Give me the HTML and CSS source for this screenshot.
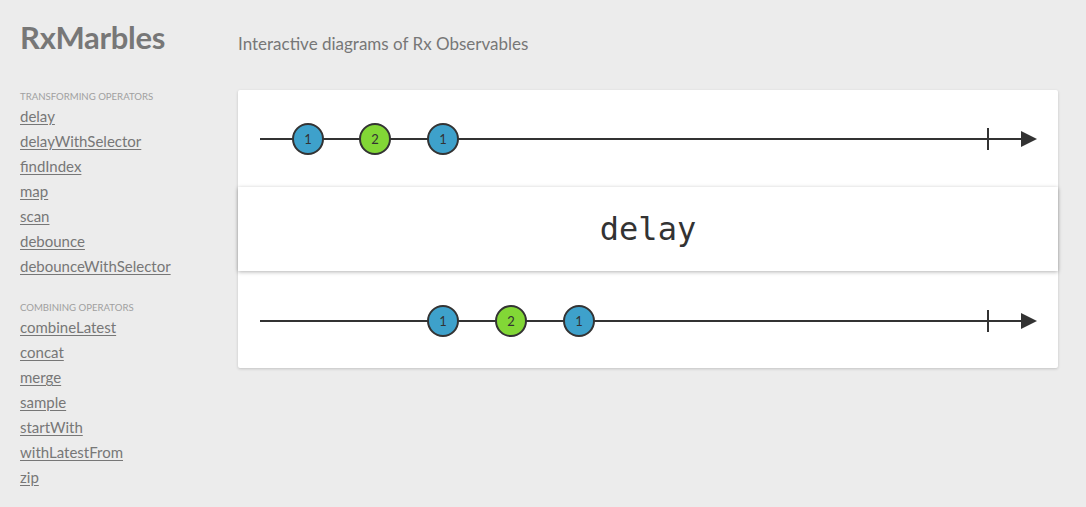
FILE: index.html
```html
<!DOCTYPE html>
<html>
<head>
<meta charset="utf-8">
<title>RxMarbles</title>
<link rel="stylesheet" href="styles.css">
</head>
<body>
<div class="page">
  <aside class="sidebar">
    <h1 class="logo">RxMarbles</h1>
    <div class="group">
      <div class="group-title">TRANSFORMING OPERATORS</div>
      <ul class="ops">
        <li><a href="#">delay</a></li>
        <li><a href="#">delayWithSelector</a></li>
        <li><a href="#">findIndex</a></li>
        <li><a href="#">map</a></li>
        <li><a href="#">scan</a></li>
        <li><a href="#">debounce</a></li>
        <li><a href="#">debounceWithSelector</a></li>
      </ul>
    </div>
    <div class="group">
      <div class="group-title">COMBINING OPERATORS</div>
      <ul class="ops">
        <li><a href="#">combineLatest</a></li>
        <li><a href="#">concat</a></li>
        <li><a href="#">merge</a></li>
        <li><a href="#">sample</a></li>
        <li><a href="#">startWith</a></li>
        <li><a href="#">withLatestFrom</a></li>
        <li><a href="#">zip</a></li>
      </ul>
    </div>
  </aside>
  <main class="main">
    <h2 class="subtitle">Interactive diagrams of Rx Observables</h2>
    <div class="card">
      <div class="stream">
        <svg width="820" height="97" viewBox="0 0 820 97">
          <line x1="22" y1="49" x2="790" y2="49" class="axis"/>
          <line x1="750" y1="38" x2="750" y2="60" class="axis"/>
          <polygon points="783,41 799,49 783,57" class="arrow"/>
          <g class="marble blue"><circle cx="70" cy="49" r="15"/><text x="70" y="53.5">1</text></g>
          <g class="marble green"><circle cx="137" cy="49" r="15"/><text x="137" y="53.5">2</text></g>
          <g class="marble blue"><circle cx="205" cy="49" r="15"/><text x="205" y="53.5">1</text></g>
        </svg>
      </div>
      <div class="operator">delay</div>
      <div class="stream">
        <svg width="820" height="97" viewBox="0 0 820 97">
          <line x1="22" y1="50" x2="790" y2="50" class="axis"/>
          <line x1="750" y1="39" x2="750" y2="61" class="axis"/>
          <polygon points="783,42 799,50 783,58" class="arrow"/>
          <g class="marble blue"><circle cx="205" cy="50" r="15"/><text x="205" y="54.5">1</text></g>
          <g class="marble green"><circle cx="273" cy="50" r="15"/><text x="273" y="54.5">2</text></g>
          <g class="marble blue"><circle cx="341" cy="50" r="15"/><text x="341" y="54.5">1</text></g>
        </svg>
      </div>
    </div>
  </main>
</div>
</body>
</html>
```

FILE: styles.css
```css
html, body {
  margin: 0;
  padding: 0;
  background: #ececec;
  font-family: Lato, "Open Sans", "Liberation Sans", sans-serif;
}

.page {
  display: flex;
  align-items: flex-start;
}

.sidebar {
  width: 218px;
  padding-left: 20px;
  padding-top: 18px;
}

.logo {
  margin: 0;
  font-size: 31px;
  line-height: 38px;
  font-weight: 700;
  color: #777;
  letter-spacing: -0.3px;
}

.group {
  margin-top: 35px;
}

.group + .group {
  margin-top: 22px;
}

.group-title {
  font-size: 9.6px;
  line-height: 12px;
  color: #a0a0a0;
  margin-bottom: 2px;
}

.ops {
  list-style: none;
  margin: 0;
  padding: 0;
}

.ops li {
  height: 25px;
  line-height: 22px;
}

.ops a {
  font-size: 15px;
  color: #777;
  text-decoration: underline;
  text-underline-offset: 2px;
}

.main {
  width: 820px;
  padding-top: 33px;
}

.subtitle {
  margin: 0;
  font-size: 17px;
  line-height: 22px;
  font-weight: 400;
  color: #777;
}

.card {
  margin-top: 35px;
  background: #fff;
  border-radius: 2px;
  box-shadow: 0 1px 3px rgba(0, 0, 0, 0.18);
}

.stream svg {
  display: block;
}

.axis {
  stroke: #333;
  stroke-width: 2;
}

.arrow {
  fill: #333;
}

.marble circle {
  stroke: #333;
  stroke-width: 2;
}

.marble.blue circle { fill: #3ea1cb; }
.marble.green circle { fill: #82d736; }

.marble text {
  font-family: Lato, "Open Sans", sans-serif;
  font-size: 13px;
  fill: #333;
  text-anchor: middle;
}

.operator {
  height: 84px;
  display: flex;
  align-items: center;
  justify-content: center;
  font-family: "DejaVu Sans Mono", "Liberation Mono", monospace;
  font-size: 32px;
  color: #333;
  background: #fff;
  box-shadow: 0 1px 4px rgba(0, 0, 0, 0.3);
  position: relative;
}
```
